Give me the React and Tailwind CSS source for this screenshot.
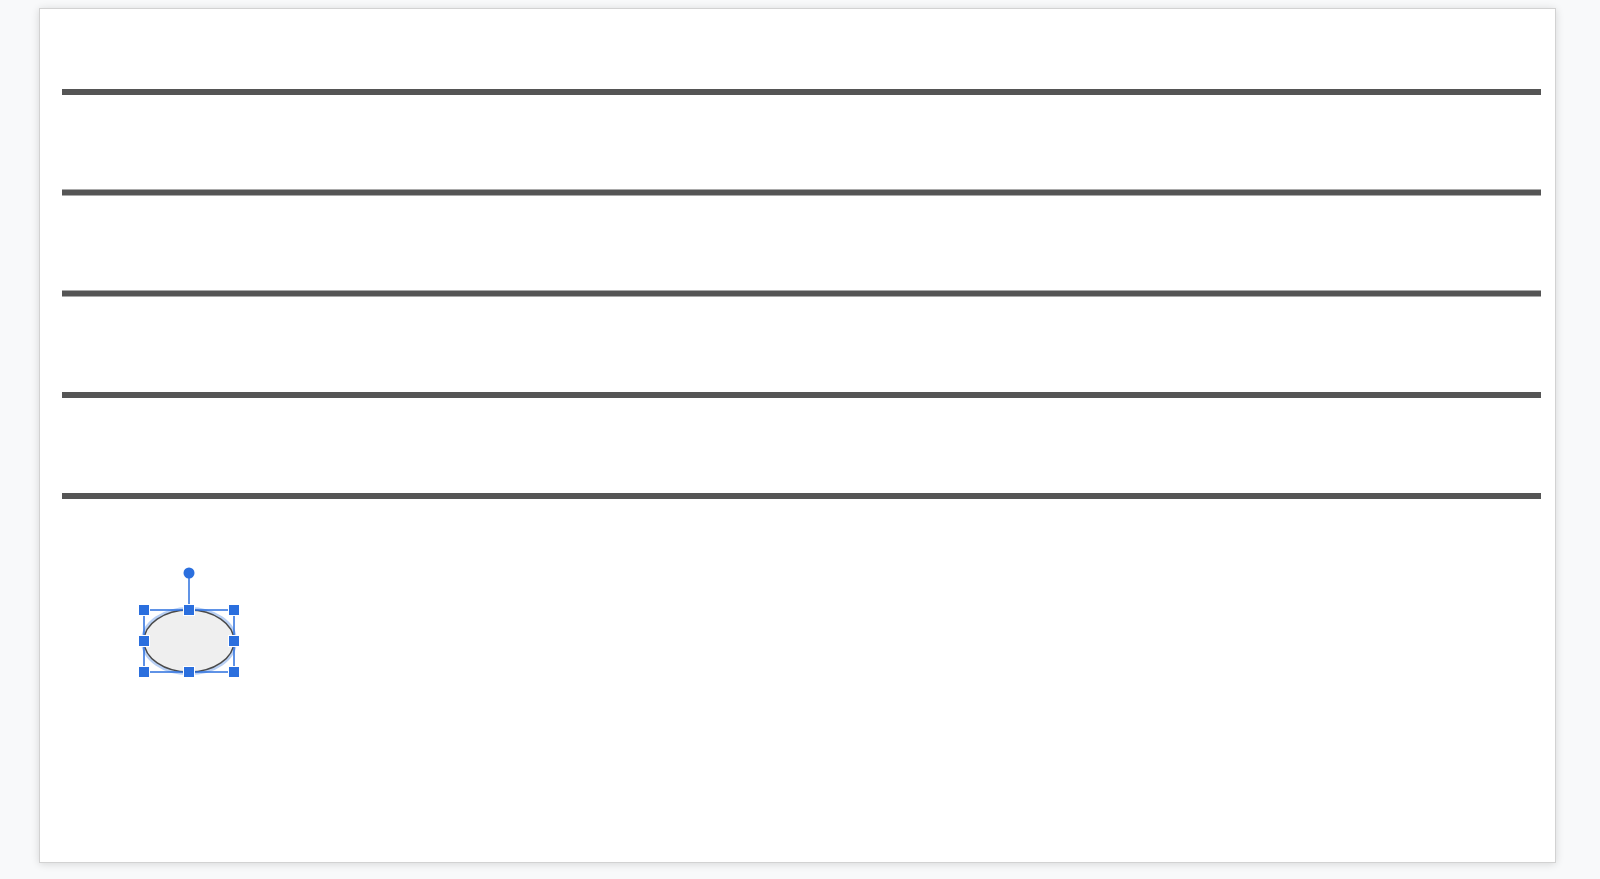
import React from 'react';

const BLUE = '#2b6fde';
const lineYs = [92, 192.5, 293.5, 395, 496];

const Handle = ({ x, y }) => (
  <rect x={x - 5.5} y={y - 5.5} width="11" height="11" fill={BLUE} stroke="#ffffff" strokeWidth="1" />
);

const Canvas = () => {
  const cx = 189;
  const cy = 641;
  const left = 144;
  const right = 234;
  const top = 610;
  const bottom = 672;

  return (
    <svg className="block w-full h-full" viewBox="40 9 1515 853" preserveAspectRatio="none">
      {lineYs.map((y) => (
        <line key={y} x1="62" y1={y} x2="1541" y2={y} stroke="#555555" strokeWidth="6" />
      ))}

      {/* selected ellipse */}
      <ellipse cx={cx} cy={cy} rx="45" ry="31" fill="none" stroke="#b9d0f4" strokeWidth="6" />
      <ellipse cx={cx} cy={cy} rx="45" ry="31" fill="#efefef" stroke="#4a4a4a" strokeWidth="1.5" />

      {/* selection frame */}
      <rect x={left} y={top} width={right - left} height={bottom - top} fill="none" stroke={BLUE} strokeWidth="1.5" />
      <line x1={cx} y1="573" x2={cx} y2={top} stroke={BLUE} strokeWidth="1.5" />
      <circle cx={cx} cy="573" r="5.5" fill={BLUE} />
      <Handle x={left} y={top} />
      <Handle x={cx} y={top} />
      <Handle x={right} y={top} />
      <Handle x={left} y={cy} />
      <Handle x={right} y={cy} />
      <Handle x={left} y={bottom} />
      <Handle x={cx} y={bottom} />
      <Handle x={right} y={bottom} />
    </svg>
  );
};

const App = () => {
  return (
    <div className="w-full h-[879px] bg-[#f8f9fa] overflow-hidden pt-2 pl-[39px]">
      <div className="w-[1517px] h-[855px] bg-white border border-[#d2d2d2] shadow-[0_1px_8px_rgba(0,0,0,0.14)]">
        <Canvas />
      </div>
    </div>
  );
};

export default App;
